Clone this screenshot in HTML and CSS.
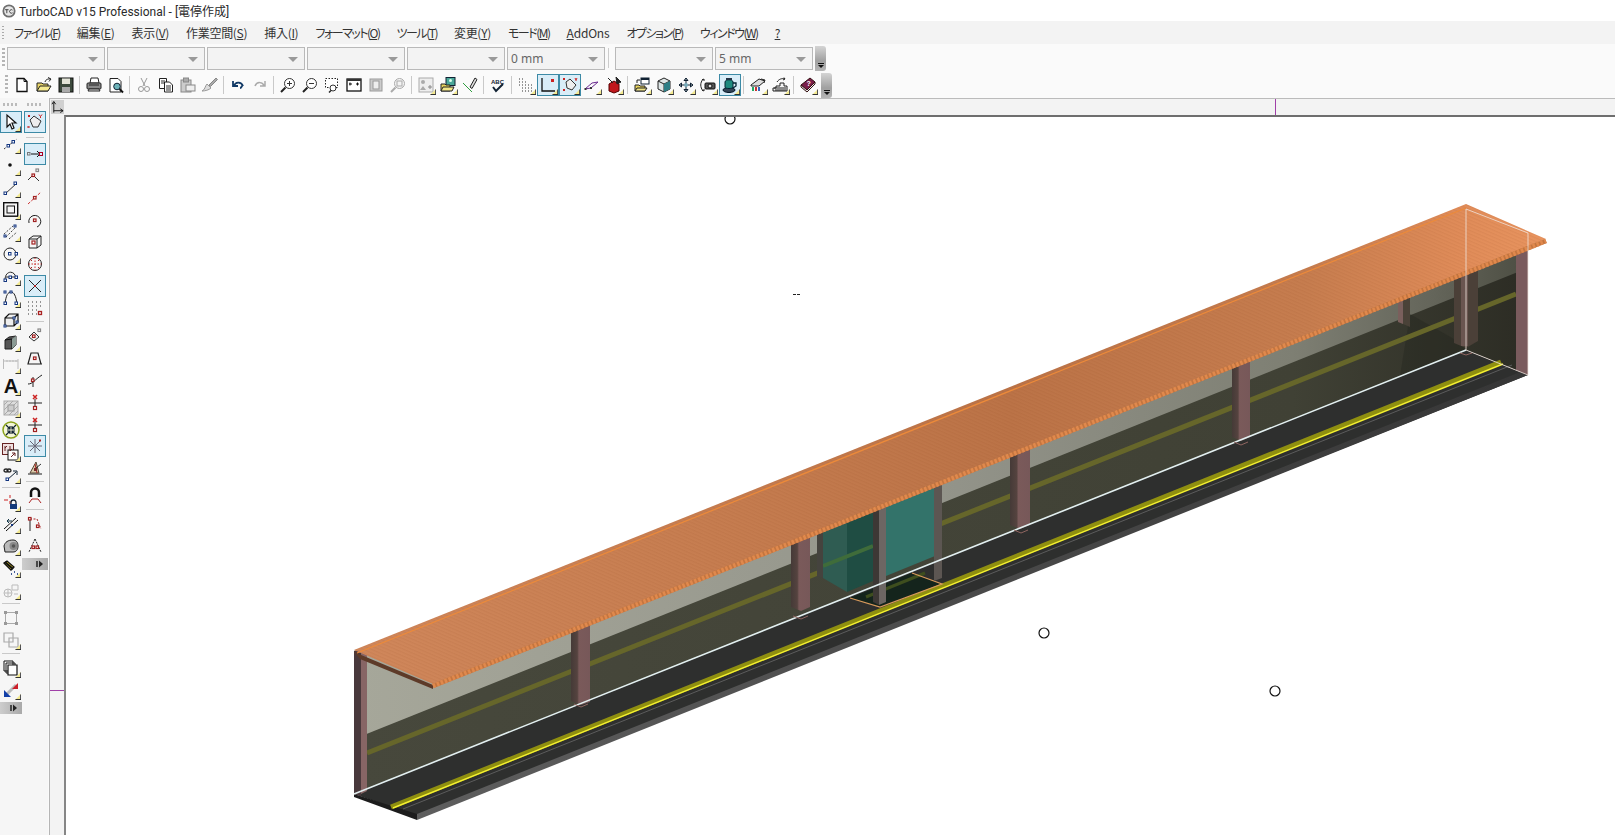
FILE: index.html
```html
<!DOCTYPE html>
<html lang="ja">
<head>
<meta charset="utf-8">
<title>TurboCAD v15 Professional</title>
<link rel="stylesheet" href="styles.css">
</head>
<body>
<div class="app">
  <header class="titlebar">
    <svg class="appicon" viewBox="0 0 16 16"><circle cx="8" cy="8" r="7.500" fill="#6f6f6f"/><circle cx="8" cy="8" r="5.500" fill="#e8e8e8"/><path d="M3.500 6.500h4M5.500 6.500v4M12 7a2 2 0 1 0 0 3" fill="none" stroke="#333"/></svg>
    <span>TurboCAD v15 Professional - [電停作成]</span>
  </header>
  <nav class="menubar">
    <span class="menu-grip"></span>
    <span class="mi k">ファイル(<u>F</u>)</span><span class="mi j">編集(<u>E</u>)</span><span class="mi j">表示(<u>V</u>)</span><span class="mi j">作業空間(<u>S</u>)</span><span class="mi j">挿入(<u>I</u>)</span><span class="mi k">フォーマット(<u>O</u>)</span><span class="mi k">ツール(<u>T</u>)</span><span class="mi j">変更(<u>Y</u>)</span><span class="mi k">モード(<u>M</u>)</span><span class="mi a">AddOns</span><span class="mi k">オプション(<u>P</u>)</span><span class="mi k">ウィンドウ(<u>W</u>)</span><span class="mi"><u>?</u></span>
  </nav>
  <div class="combobar">
    <span class="grip-v"></span>
    <div class="combo"></div><div class="combo"></div><div class="combo"></div><div class="combo"></div><div class="combo"></div><div class="combo">0 mm</div>
    <span class="combo-sep"></span>
    <div class="combo"></div><div class="combo">5 mm</div>
    <span class="overflow"></span>
  </div>
  <div class="toolbar">
    <span class="grip-v"></span>
    <span class="b"><svg viewBox="0 0 16 16"><path d="M3 1.500h7l3 3v10H3z" fill="#fff" stroke="#111" stroke-width="1.300"/><path d="M10 1.500v3h3" fill="none" stroke="#111"/></svg></span>
    <span class="b"><svg viewBox="0 0 16 16"><path d="M1 6h5l1 1h5v7H1z" fill="#e8d468" stroke="#222"/><path d="M1 14l3-5h11l-3 5z" fill="#f5ea90" stroke="#222"/><path d="M9 5c1-3 3-3 5-3M12 0.500l3 1.500-2 2.500" fill="none" stroke="#222"/></svg></span>
    <span class="b"><svg viewBox="0 0 16 16"><rect x="1" y="1" width="14" height="14" fill="#3d4a3d" stroke="#111"/><rect x="4" y="1.500" width="8" height="5.500" fill="#e4e4d8"/><rect x="4" y="10" width="8" height="5" fill="#aaa"/></svg></span>
    <span class="sep"></span>
    <span class="b"><svg viewBox="0 0 16 16"><path d="M4 6l1-5h7l1 5z" fill="#fff" stroke="#222"/><rect x="1" y="6" width="14" height="6" rx="1" fill="#888" stroke="#222"/><path d="M3 12l-1 2h12l-1-2z" fill="#ddd" stroke="#222"/><path d="M3 8h10" stroke="#222"/></svg></span>
    <span class="b"><svg viewBox="0 0 16 16"><path d="M2 1.500h8l3 3V15H2z" fill="#fff" stroke="#222"/><circle cx="9" cy="9.500" r="3.300" fill="#6cb2b8" stroke="#123"/><path d="M11.500 12l3.500 3.500" stroke="#111" stroke-width="2"/></svg></span>
    <span class="sep"></span>
    <span class="b"><svg viewBox="0 0 16 16" class="off"><path d="M5 1l4 8M11 1L7 9"/><circle cx="5" cy="12" r="2.500"/><circle cx="11" cy="12" r="2.500"/></svg></span>
    <span class="b"><svg viewBox="0 0 16 16"><path d="M1.500 1.500h7v10h-7z" fill="#fff" stroke="#222"/><path d="M6.500 5h5l3 3v7h-8z" fill="#fff" stroke="#222"/><path d="M3 4h4M3 6h3M8 9h5M8 11h5M8 13h5" stroke="#333"/></svg></span>
    <span class="b"><svg viewBox="0 0 16 16"><rect x="1" y="3" width="10" height="12" fill="#ccc" stroke="#888"/><rect x="3.500" y="1" width="5" height="4" fill="#aaa" stroke="#888"/><rect x="6" y="8" width="9" height="6" fill="#eee" stroke="#888"/></svg></span>
    <span class="b"><svg viewBox="0 0 16 16"><path d="M0 14c3-1 3-5 5-7l4 4c-2 2-6 3-9 3z" fill="#ddd" stroke="#999"/><path d="M7 8l7-7 1.500 1.500-7 7z" fill="#aaa" stroke="#888"/></svg></span>
    <span class="sep"></span>
    <span class="b"><svg viewBox="0 0 16 16"><path d="M4 9c1-4 7-5 9 0-1-2-1 2-3 2M3 4v5h5" fill="none" stroke="#123a66" stroke-width="1.800"/></svg></span>
    <span class="b"><svg viewBox="0 0 16 16"><path d="M12 9c-1-4-7-5-9 0M13 4v5H8" fill="none" stroke="#aaa" stroke-width="1.500"/></svg></span>
    <span class="sep"></span>
    <span class="b"><svg viewBox="0 0 16 16"><circle cx="9.500" cy="6.500" r="5" fill="#fff" stroke="#333"/><path d="M7 6.500h5M9.500 4v5" stroke="#333"/><path d="M5.500 10.500L1 15" stroke="#222" stroke-width="2"/></svg></span>
    <span class="b"><svg viewBox="0 0 16 16"><circle cx="9.500" cy="6.500" r="5" fill="#fff" stroke="#333"/><path d="M7 6.500h5" stroke="#333"/><path d="M5.500 10.500L1 15" stroke="#222" stroke-width="2"/></svg></span>
    <span class="b"><svg viewBox="0 0 16 16"><rect x="1.500" y="1.500" width="12" height="9" fill="#fff" stroke="#222" stroke-dasharray="1.500 1.500"/><circle cx="9" cy="11" r="3" fill="#fff" stroke="#333"/><path d="M7 13.500L5 15.500" stroke="#222" stroke-width="1.500"/></svg></span>
    <span class="b"><svg viewBox="0 0 16 16"><rect x="1" y="2" width="14" height="12" fill="#fff" stroke="#111" stroke-width="1.300"/><rect x="1" y="2" width="14" height="2" fill="#333"/><path d="M3 7h3M4 5.500v3M10 7h3M11.500 5.500v3" stroke="#111"/></svg></span>
    <span class="b"><svg viewBox="0 0 16 16"><rect x="2" y="2" width="12" height="12" fill="#ccc" stroke="#999"/><rect x="5" y="4" width="6" height="8" fill="#eee" stroke="#999"/></svg></span>
    <span class="b"><svg viewBox="0 0 16 16"><circle cx="9.500" cy="6.500" r="5" fill="#f4f4f4" stroke="#aaa"/><rect x="7" y="4" width="5" height="5" fill="none" stroke="#aaa"/><path d="M5.500 10.500L1 15" stroke="#aaa" stroke-width="2"/></svg></span>
    <span class="sep"></span>
    <span class="b fly"><svg viewBox="0 0 16 16"><rect x="1" y="1" width="14" height="14" fill="#eee" stroke="#aaa"/><circle cx="5" cy="5" r="2" fill="#aaa"/><path d="M2 13l3-4 3 4z" fill="#aaa"/><path d="M10 10h4M12 8v4" stroke="#888"/></svg></span>
    <span class="b fly"><svg viewBox="0 0 16 16"><rect x="6" y="0.500" width="9" height="8" fill="#4aa89a" stroke="#123"/><circle cx="10.500" cy="3.500" r="1.500" fill="#dfe"/><path d="M1 7h4l1 1h4v6H1z" fill="#e7d35c" stroke="#222"/><path d="M1 14l2-4h11l-2 4z" fill="#f1e688" stroke="#222"/></svg></span>
    <span class="b"><svg viewBox="0 0 16 16"><path d="M1 6l9 9" stroke="#2f9d3f"/><path d="M8 10l5-9 2 1.500-5 9z" fill="#ddd" stroke="#222"/></svg></span>
    <span class="sep"></span>
    <span class="b"><svg viewBox="0 0 16 16"><text x="1" y="6.500" class="abc">ABC</text><path d="M3 10l3 4 7-7" fill="none" stroke="#123" stroke-width="2"/></svg></span>
    <span class="sep"></span>
    <span class="b fly"><svg viewBox="0 0 16 16" class="dots"><path d="M1 2h1M4 2h1M1 5h1M4 5h1M7 5h1M1 8h1M4 8h1M7 8h1M10 8h1M13 8h1M4 11h1M7 11h1M10 11h1M13 11h1M4 14h1M7 14h1M10 14h1M13 14h1"/></svg></span>
    <span class="b on fly"><svg viewBox="0 0 16 16"><path d="M2 1v13h13" fill="none" stroke="#111" stroke-width="1.300"/><rect x="11" y="2" width="3" height="3" fill="#c22"/></svg></span>
    <span class="b on fly"><svg viewBox="0 0 16 16"><path d="M4 5l4-3 6 6-4 5-5-2z" fill="#eee" stroke="#333"/><path d="M1 1l2 2M3 1L1 3M1 12l2 2M3 12l-2 2" stroke="#c22"/><path d="M13 1l1 2 1-2M14 3v1" stroke="#c22" fill="none"/></svg></span>
    <span class="b fly"><svg viewBox="0 0 16 16"><path d="M1 12l6-1 7-6-6 1z" fill="none" stroke="#6a2a90"/><rect x="0.500" y="11" width="2" height="2" fill="#333"/><rect x="6" y="10" width="2" height="2" fill="#333"/></svg></span>
    <span class="b fly"><svg viewBox="0 0 16 16"><path d="M3 7l5-3 5 3v7l-5 2-5-2z" fill="#c0171c" stroke="#500"/><path d="M2 1l5 5M10 0l5 5-4 2z" fill="#222" stroke="#222"/></svg></span>
    <span class="sep"></span>
    <span class="b fly"><svg viewBox="0 0 16 16"><rect x="7" y="1" width="8" height="6" fill="#fff" stroke="#123"/><path d="M7 1h8v2H7z" fill="#123"/><path d="M1 8h4l1 1h5v5H1z" fill="#e7d35c" stroke="#222"/><path d="M1 14l2-3h10l-2 3z" fill="#f1e688" stroke="#222"/><path d="M3 6V3h3" fill="none" stroke="#222"/></svg></span>
    <span class="b fly"><svg viewBox="0 0 16 16"><path d="M8 1l6 3v8l-6 3-6-3V4z" fill="#dfe7e7" stroke="#222"/><path d="M2 4l6 3 6-3M8 7v8" fill="none" stroke="#222"/><path d="M8 7l6-3v8l-6 3z" fill="#2d7f86"/></svg></span>
    <span class="b fly"><svg viewBox="0 0 16 16"><path d="M8 1v14M1 8h14M8 1L6 3.500h4zM8 15l-2-2.500h4zM1 8l2.500-2v4zM15 8l-2.500-2v4z" fill="#fff" stroke="#123"/><circle cx="8" cy="8" r="2" fill="#7ab"/></svg></span>
    <span class="b fly"><svg viewBox="0 0 16 16"><path d="M3 2C0 6 0 10 3 14M2 3l2-1v2M2 13l2 1v-2" fill="none" stroke="#222"/><rect x="5" y="6" width="10" height="6" rx="1" fill="#555" stroke="#111"/><circle cx="10" cy="9" r="2" fill="#ddd" stroke="#111"/></svg></span>
    <span class="b on fly"><svg viewBox="0 0 16 16"><ellipse cx="7" cy="13" rx="6" ry="2.500" fill="#345" stroke="#012"/><path d="M3 5c0-3 8-3 8 0v5c0 2-8 2-8 0z" fill="#1e8a7f" stroke="#023"/><path d="M11 6h3v3l-3 2" fill="none" stroke="#023" stroke-width="1.300"/><path d="M4 2h6" stroke="#234" stroke-width="2"/></svg></span>
    <span class="sep"></span>
    <span class="b fly"><svg viewBox="0 0 16 16"><path d="M1 8l8-6 6 2-6 5H1z" fill="#ddd" stroke="#222"/><path d="M2 10h2v4H2z" fill="#2a6"/><path d="M5 10h2v4H5z" fill="#c33"/><path d="M8 10h2v4H8z" fill="#36b"/><path d="M11 2l4 1-1 3" fill="none" stroke="#222"/></svg></span>
    <span class="b fly"><svg viewBox="0 0 16 16"><path d="M1 14h14V9h-3V6H8v3H4v2H1z" fill="#f4f4f4" stroke="#222"/><path d="M2 11h12M3 13h11" stroke="#222"/><path d="M5 5c2-3 5-4 8-3l-1-1.500M13 2l-2 1" fill="none" stroke="#222"/></svg></span>
    <span class="sep"></span>
    <span class="b fly"><svg viewBox="0 0 16 16"><path d="M1 8l9-7 5 4-8 8z" fill="#7a1e4a" stroke="#311"/><path d="M1 8v2l6 5 8-8V5l-8 8z" fill="#eee" stroke="#311"/><text x="6.500" y="8.500" class="qm">?</text></svg></span>
    <span class="overflow tall"></span>
  </div>
  <div class="workspace">
    <aside class="tools-left">
      <div class="tcol">
        <span class="grip-h"></span>
        <span class="b on fly"><svg viewBox="0 0 16 16"><path d="M4 1v12l3-3 2 5 2-1-2-5h4z" fill="#fff" stroke="#111" stroke-width="1.200"/></svg></span>
        <span class="b fly"><svg viewBox="0 0 16 16" class="blue"><path d="M1 13l13-10" stroke="#333" stroke-dasharray="2 2"/><rect x="4" y="8.500" width="2.500" height="2.500"/><rect x="9" y="4.500" width="2.500" height="2.500"/></svg></span>
        <span class="b fly"><svg viewBox="0 0 16 16"><circle cx="7" cy="7" r="1.800" fill="#111"/></svg></span>
        <span class="b fly"><svg viewBox="0 0 16 16" class="blue"><path d="M2 14L14 3" stroke="#333"/><rect x="1" y="12" width="2.500" height="2.500"/><rect x="11" y="2" width="2.500" height="2.500"/></svg></span>
        <span class="b fly"><svg viewBox="0 0 16 16" class="dark"><rect x="0.700" y="0.700" width="14" height="13.500" stroke-width="1.400"/><rect x="4" y="4" width="7.500" height="7"/></svg></span>
        <span class="b fly"><svg viewBox="0 0 16 16" class="blue"><path d="M1 10l9-8M3 13l9-9M6 15l8-7" stroke="#444" stroke-dasharray="2 1.500"/><rect x="1" y="11" width="2" height="2"/><rect x="11" y="1" width="2" height="2"/></svg></span>
        <span class="b fly"><svg viewBox="0 0 16 16" class="blue"><circle cx="7" cy="8" r="6" stroke="#222"/><rect x="5.500" y="6.500" width="2.500" height="2.500"/><rect x="12" y="6.500" width="2.500" height="2.500"/></svg></span>
        <span class="b fly"><svg viewBox="0 0 16 16" class="blue"><path d="M2 12C2 2 12 2 13 10M3 9h9" stroke="#222"/><rect x="1" y="11" width="2.500" height="2.500"/><rect x="6" y="8" width="2.500" height="2.500"/><rect x="12" y="8" width="2.500" height="2.500"/></svg></span>
        <span class="b fly"><svg viewBox="0 0 16 16" class="blue"><path d="M2 14C3 5 5 2 8 2c3 0 5 4 6 12" stroke="#222"/><rect x="1" y="1" width="2" height="2"/><rect x="1" y="12" width="2.500" height="2.500"/><rect x="7" y="1" width="2" height="2"/><rect x="12" y="12" width="2.500" height="2.500"/></svg></span>
        <span class="b fly"><svg viewBox="0 0 16 16" class="blue"><path d="M2 6l4-4h9v8l-4 4H2zM2 6h9v8M11 6l4-4" stroke="#111" stroke-width="1.200" fill="#eee"/><rect x="1" y="13" width="2" height="2"/><rect x="10" y="5" width="2" height="2"/><rect x="13" y="9" width="2" height="2"/></svg></span>
        <span class="b fly"><svg viewBox="0 0 16 16"><path d="M2 6l4-3 7-1v9l-4 4-7 0z" fill="#555" stroke="#222"/><path d="M2 6l7-1v10" fill="none" stroke="#111"/><path d="M9 5l4-3v9l-4 4z" fill="#8a9a94"/></svg></span>
        <span class="b fly"><svg viewBox="0 0 16 16"><path d="M0.500 3v10M15 3v10M1 5h14M4 4v2M7 4v2M10 4v2M13 4v2" fill="none" stroke="#bbb"/></svg></span>
        <span class="b fly"><span class="bigA">A</span></span>
        <span class="b fly"><svg viewBox="0 0 16 16"><rect x="1" y="1" width="14" height="14" fill="#ddd" stroke="#aaa"/><path d="M1 5l4-4M1 10L10 1M1 15L15 1M6 15l9-9M11 15l4-4" stroke="#aaa"/><rect x="5" y="5" width="6" height="6" fill="#ccc" stroke="#999"/></svg></span>
        <span class="b"><svg viewBox="0 0 18 18" class="big"><circle cx="9" cy="9" r="8" fill="#f4f6d8" stroke="#8aa21a" stroke-width="1.500"/><path d="M4 4l4 4M8 5v3H5M14 4l-4 4M10 5v3h3M4 14l4-4M8 13v-3H5M14 14l-4-4M10 13v-3h3" fill="none" stroke="#123" stroke-width="1.200"/></svg></span>
        <span class="b fly"><svg viewBox="0 0 18 18" class="big"><rect x="0.500" y="0.500" width="11" height="11" fill="#efe0e0" stroke="#622"/><rect x="6" y="7" width="10" height="10" fill="#fff" stroke="#111"/><path d="M3 3v5M5 3L3 5M8 3v5M10 6L8 8M9 14l4-4M13 13v-3h-3" fill="none" stroke="#622"/></svg></span>
        <span class="b fly"><svg viewBox="0 0 16 16"><path d="M1 4.500c0-2 4-2 4 0s-4 2-4 0zM4 4.500c0-2 4-2 4 0s-4 2-4 0z" fill="none" stroke="#222" stroke-width="1.300"/><path d="M4 14L13 6M10 5h4v4" fill="none" stroke="#123"/><rect x="3" y="12" width="2.500" height="2.500" fill="#fff" stroke="#13357f"/></svg></span>
        <span class="hsep"></span>
        <span class="b fly"><svg viewBox="0 0 16 16"><path d="M1 6h4M7 1v3M7 7v3" stroke="#c22" fill="none"/><path d="M8 11V8.500a2.500 2.500 0 0 1 5 0V11" fill="none" stroke="#123" stroke-width="1.300"/><rect x="7" y="10" width="7" height="5" fill="#123a7a"/></svg></span>
        <span class="b fly"><svg viewBox="0 0 16 16"><path d="M1 13L13 2M3 15L15 4" stroke="#111" fill="none"/><path d="M4 5h5M6 3l-2 2 2 2" stroke="#134" fill="none"/><rect x="8" y="8" width="2" height="2" fill="#13357f"/></svg></span>
        <span class="b fly"><svg viewBox="0 0 16 16"><path d="M1 8c1-4 4-6 9-6 3 0 5 2 5 6s-2 6-5 6H2z" fill="#bbb" stroke="#222"/><circle cx="10.500" cy="8" r="4" fill="#888"/><circle cx="10.500" cy="8" r="1.800" fill="#555"/></svg></span>
        <span class="b fly"><svg viewBox="0 0 16 16"><path d="M1 3l3-2 7 6-3 3z" fill="#e0c820" stroke="#111" stroke-width="1.300"/><path d="M2 2l8 7" stroke="#111" stroke-width="2"/><path d="M8 14h.8M11 12h.8M14 14h.8" stroke="#13357f" stroke-width="2"/></svg></span>
        <span class="b fly"><svg viewBox="0 0 16 16"><circle cx="5" cy="11" r="4" fill="none" stroke="#bbb"/><path d="M1 11h8M5 7v8M9 3h6v5H9zM11 12h4" fill="none" stroke="#bbb"/></svg></span>
        <span class="hsep"></span>
        <span class="b"><svg viewBox="0 0 16 16"><rect x="2.500" y="2.500" width="11" height="11" fill="none" stroke="#aaa"/><path d="M1 1h3v3H1zM12 1h3v3h-3zM1 12h3v3H1zM12 12h3v3h-3z" fill="#999"/></svg></span>
        <span class="b fly"><svg viewBox="0 0 16 16"><path d="M1 1h9v9H1zM6 6h9v9H6z" fill="none" stroke="#aaa" stroke-width="1.200"/></svg></span>
        <span class="hsep"></span>
        <span class="b fly"><svg viewBox="0 0 16 16"><path d="M1 1h9v10H1z M3 3h9v10H3z" fill="#fff" stroke="#111"/><path d="M5 5h9v10H5z" fill="#fff" stroke="#111" stroke-width="1.200"/></svg></span>
        <span class="b fly"><svg viewBox="0 0 16 16"><path d="M3 13L13 3" stroke="#bbb" stroke-width="3"/><path d="M1 8v7h7z" fill="#123fa8"/><path d="M15 1v6H9z" fill="#cc1f2a"/></svg></span>
        <span class="handle"><svg viewBox="0 0 8 8"><path d="M1 1v6" stroke="#222" stroke-width="1.500"/><path d="M3 0.500l4 3.500-4 3.500z" fill="#222"/></svg></span>
      </div>
      <div class="tcol second">
        <span class="grip-h"></span>
        <span class="b on"><svg viewBox="0 0 16 16"><path d="M3 6l4-4 7 5-3 6H6z" fill="#eee" stroke="#333"/><path d="M1 1l2 2M3 1L1 3M0.500 12l2 2M2.500 12l-2 2" stroke="#c22"/><path d="M12 0.500l1.500 2 1.500-2M13.500 2.500V4" stroke="#c22" fill="none"/></svg></span>
        <span class="hsep wide"></span>
        <span class="b on"><svg viewBox="0 0 16 16"><path d="M4 8h9M10 5l3 3-3 3" fill="none" stroke="#111"/><rect x="0.500" y="6.500" width="2.500" height="2.500" fill="none" stroke="#777"/><rect x="12.500" y="6.500" width="3" height="3" fill="none" stroke="#a02"/></svg></span>
        <span class="b"><svg viewBox="0 0 16 16" class="red"><path d="M1 12l5-5 6 6" stroke="#333"/><rect x="5" y="6" width="2.500" height="2.500"/><rect x="9" y="1" width="2.500" height="2.500" class="grey"/></svg></span>
        <span class="b"><svg viewBox="0 0 16 16" class="red"><path d="M1 14L14 2" stroke="#c33" stroke-dasharray="3 1.500"/><rect x="6.500" y="6.500" width="2.500" height="2.500"/></svg></span>
        <span class="b"><svg viewBox="0 0 16 16" class="red"><path d="M2 11a6 6 0 1 1 8 4" stroke="#222"/><rect x="6.500" y="7" width="2.500" height="2.500"/></svg></span>
        <span class="b"><svg viewBox="0 0 16 16" class="red"><path d="M2 5l4-3h8v9l-4 3H2zM2 5h8v9M10 5l4-3" stroke="#222"/><rect x="5" y="7" width="3" height="3"/></svg></span>
        <span class="b"><svg viewBox="0 0 16 16" class="red"><circle cx="8" cy="8" r="6.500" stroke="#222"/><path d="M1.500 8h13M8 1.500v13" stroke="#c33" stroke-dasharray="1.500 1.500"/><path d="M3 3l2 2M13 3l-2 2M3 13l2-2M13 13l-2-2" stroke="#a22"/></svg></span>
        <span class="b on"><svg viewBox="0 0 16 16"><path d="M2 2l12 12M14 2L2 14" stroke="#222"/><rect x="7" y="7" width="2" height="2" fill="#a22"/></svg></span>
        <span class="b"><svg viewBox="0 0 16 16" class="dots"><path d="M1 2h1M5 2h1M9 2h1M13 2h1M1 6h1M5 6h1M9 6h1M13 6h1M1 10h1M5 10h1M9 10h1M1 14h1M5 14h1M9 14h1"/><rect x="11.500" y="11.500" width="3" height="3" fill="none" stroke="#a22" stroke-width="1.300"/></svg></span>
        <span class="hsep"></span>
        <span class="b"><svg viewBox="0 0 16 16" class="red"><path d="M2 9l5-5 5 5-5 4z" stroke="#333"/><rect x="5.500" y="7" width="2.500" height="2.500"/><rect x="11" y="1" width="2.500" height="2.500" class="grey"/></svg></span>
        <span class="b"><svg viewBox="0 0 16 16" class="red"><path d="M4 3h7l3 11H1z M1 14h14" stroke="#222" stroke-width="1.200"/><rect x="6.500" y="7" width="2.500" height="2.500"/></svg></span>
        <span class="b"><svg viewBox="0 0 16 16" class="red"><path d="M1 12c5 0 6-4 14-9M6 15V5" stroke="#222"/><rect x="4.500" y="7" width="2.500" height="2.500"/></svg></span>
        <span class="b"><svg viewBox="0 0 16 16" class="red"><path d="M1 9h14M8 5v10" stroke="#222"/><path d="M6 1l4 4M10 1L6 5" stroke="#c22" stroke-width="1.500"/><rect x="6.500" y="12.500" width="3" height="3"/></svg></span>
        <span class="b"><svg viewBox="0 0 16 16" class="red"><path d="M1 9h14M8 5v10" stroke="#222"/><path d="M6 2l4 4M10 2L6 6" stroke="#c22" stroke-width="1.500"/><rect x="6.500" y="12.500" width="3" height="3"/></svg></span>
        <span class="b on"><svg viewBox="0 0 16 16"><path d="M1 8h14M8 1v14M3 3l10 10M13 3L3 13" stroke="#667"/><rect x="12" y="1.500" width="2" height="2" fill="#a22"/></svg></span>
        <span class="b"><svg viewBox="0 0 16 16"><path d="M1 14h14" stroke="#888" stroke-width="2"/><path d="M9 2L3 13h9z" fill="#d9c9a9" stroke="#543"/><path d="M8 4l2 9" stroke="#a22"/><path d="M9 8l5-4" stroke="#333"/><rect x="7" y="8" width="3" height="3" fill="#7a2a2a"/></svg></span>
        <span class="hsep"></span>
        <span class="b"><svg viewBox="0 0 16 16"><path d="M4 9V4.500a4 4 0 0 1 8 0V9" fill="none" stroke="#111" stroke-width="2.500"/><path d="M2 15l3-4h6l3 4" fill="none" stroke="#a22"/></svg></span>
        <span class="hsep"></span>
        <span class="b"><svg viewBox="0 0 16 16" class="red"><path d="M3 3v12" stroke="#222"/><path d="M3 3h7l4 10" stroke="#a22" stroke-dasharray="2 1.500"/><rect x="1.500" y="1.500" width="2.500" height="2.500"/><rect x="9.500" y="9" width="2.500" height="2.500"/></svg></span>
        <span class="b"><svg viewBox="0 0 16 16" class="red"><path d="M8 1L2 14M8 1l6 13" stroke="#222" stroke-dasharray="2 1"/><rect x="5" y="8" width="2.500" height="2.500"/><rect x="9" y="8" width="2.500" height="2.500"/></svg></span>
        <span class="handle"><svg viewBox="0 0 8 8"><path d="M1 1v6" stroke="#222" stroke-width="1.500"/><path d="M3 0.500l4 3.500-4 3.500z" fill="#222"/></svg></span>
      </div>
    </aside>
    <section class="docarea">
      <div class="hruler">
        <span class="corner"><svg viewBox="0 0 14 14"><path d="M3 13V2M1 4l2-3 2 3M3 11h10M10 9l3 2-3 2" fill="none" stroke="#111"/></svg></span>
        <span class="hmark"></span>
      </div>
      <div class="docbody">
        <div class="vruler"><span class="vmark"></span></div>
        <div class="canvas">
          <svg class="scene" viewBox="66 116 1549 719">
            <defs>
              <linearGradient id="gUp" gradientUnits="userSpaceOnUse" x1="354" y1="0" x2="1528" y2="0">
                <stop offset="0" stop-color="#a6a79a"/><stop offset=".5" stop-color="#93948a"/><stop offset=".8" stop-color="#7e7f73"/><stop offset=".92" stop-color="#64655a"/><stop offset="1" stop-color="#4c4d42"/>
              </linearGradient>
              <linearGradient id="gLow" gradientUnits="userSpaceOnUse" x1="354" y1="0" x2="1528" y2="0">
                <stop offset="0" stop-color="#47483c"/><stop offset=".8" stop-color="#404135"/><stop offset="1" stop-color="#2c2c24"/>
              </linearGradient>
              <linearGradient id="gRoof" gradientUnits="userSpaceOnUse" x1="354" y1="0" x2="1546" y2="0">
                <stop offset="0" stop-color="#d0875b"/><stop offset=".3" stop-color="#c67d50"/><stop offset=".55" stop-color="#bb7347"/><stop offset=".8" stop-color="#c67d4f"/><stop offset=".93" stop-color="#e08c59"/><stop offset="1" stop-color="#e8945f"/>
              </linearGradient>
              <linearGradient id="gFace" gradientUnits="userSpaceOnUse" x1="417" y1="0" x2="1528" y2="0">
                <stop offset="0" stop-color="#5e5e5e"/><stop offset="1" stop-color="#363636"/>
              </linearGradient>
              <linearGradient id="gP">
                <stop offset="0" stop-color="#453a37"/><stop offset=".33" stop-color="#55433f"/><stop offset=".42" stop-color="#7a5a5a"/><stop offset="1" stop-color="#775859"/>
              </linearGradient>
              <pattern id="corr" patternUnits="userSpaceOnUse" width="12" height="3.200" patternTransform="rotate(23.300)">
                <rect width="12" height="1.200" fill="#7a3c14" fill-opacity=".07"/>
              </pattern>
            </defs>
            <polygon points="354,650 1466,205 1528,232 1528,374 1466,349 354,793" fill="url(#gLow)"/>
            <polygon points="354,650 1466,205 1528,232 1528,267 354,738" fill="url(#gUp)"/>
            <polygon points="1410,313 1454,338 1466,349 1400,375" fill="#24251d" fill-opacity=".4"/>
            <line x1="367" y1="752" x2="1516" y2="293" stroke="#66662a" stroke-width="5"/>
            <polygon points="1398,270 1403,270 1403,323 1398,321" fill="#7a5f5c"/>
            <polygon points="1403,270 1410,270 1410,326 1403,323" fill="#4a4238"/>
            <polygon points="1454,240 1478,230 1478,340 1466,347 1454,342" fill="#4b4038"/>
            <polygon points="1461,240 1468,240 1468,345 1461,345" fill="#6a5550"/>

            <polygon points="823,470 847,470 847,591 823,577" fill="#2f5c52"/>
            <polygon points="847,470 873,470 873,580 847,591" fill="#1f4d43"/>
            <line x1="823" y1="565" x2="873" y2="545" stroke="#3f6c3a" stroke-width="4"/>
            <polygon points="817,480 823,480 823,577 817,575" fill="#45433e"/>
            <polygon points="886,470 935,450 935,555 886,575" fill="#33736a"/>

            <polygon points="354,793 1466,349 1528,374 417,815" fill="#2e2f2e"/>
            <polygon points="417,813 1528,368 1528,374 417,819" fill="url(#gFace)"/>
            <polygon points="354,793 417,813 417,819 354,796" fill="#1c1c1c"/>
            <polygon points="850,597 912,572 942,583 880,606" fill="#14241c"/>
            <line x1="866" y1="596" x2="925" y2="572" stroke="#3e4e1e" stroke-width="3"/>
            <line x1="403" y1="808" x2="1512" y2="364" stroke="#5c5c5c" stroke-width="1"/>
            <line x1="391" y1="806" x2="1501" y2="361" stroke="#8f8f10" stroke-width="5"/>
            <line x1="393" y1="807" x2="1503" y2="363" stroke="#f4f030" stroke-width="1.400"/>
            <polyline points="850,597 880,606 942,583 912,572" fill="none" stroke="#d99a5c" stroke-width="1.200"/>

            <polygon points="571,600 590,600 590,701 581,704 571,700" fill="url(#gP)"/>
            <polygon points="791,500 810,500 810,606 801,610 791,606" fill="url(#gP)"/>
            <polygon points="873,480 879,480 879,604 873,601" fill="#3d3835"/>
            <polygon points="879,480 886,480 886,601 879,604" fill="#6c6663"/>
            <polygon points="934,450 942,450 942,577 934,580" fill="#5c5652"/>
            <polygon points="1010,430 1030,430 1030,524 1020,528 1010,524" fill="url(#gP)"/>
            <polygon points="1232,340 1250,340 1250,436 1241,440 1232,436" fill="url(#gP)"/>
            <polygon points="354,650 361,650 361,795 354,793" fill="#49393c"/>
            <polygon points="361,652 367,652 367,790 361,793" fill="#876565"/>
            <polygon points="1516,240 1528,240 1528,374 1516,369" fill="#7a5b5d"/>

            <line x1="354" y1="793" x2="1466" y2="349" stroke="#e2eff0" stroke-width="1.600"/>
            <g class="bases">
              <path d="M574 703l7 3 7-3"/>
              <path d="M793 615l8 3 7-3"/>
              <path d="M1014 529l7 3 7-3"/>
              <path d="M1234 441l7 3 7-3"/>
              <path d="M1460 352l6 2 6-2"/>
            </g>
            <polygon points="354,651 433,684 433,688 360,658" fill="#5d3a28"/>
            <polygon points="354,649 1466,203 1546,238 433,683" fill="url(#gRoof)"/>
            <polygon points="354,649 1466,203 1546,238 433,683" fill="url(#corr)"/>
            <line x1="357" y1="652" x2="1466" y2="207" stroke="#ec8a3a" stroke-width="1.200"/>
            <line x1="433" y1="685" x2="1546" y2="240" stroke="#c4753f" stroke-width="4.500"/>
            <line x1="433" y1="685" x2="1546" y2="240" stroke="#e0894d" stroke-width="4.500" stroke-dasharray="2.500 1.700"/>
            <polyline points="1528,374 1466,349 1466,208 1528,232 1528,374" fill="none" stroke="#f0e4dc" stroke-opacity=".8" stroke-width="1"/>

            <g class="ctrl">
              <circle cx="730" cy="118" r="5"/>
              <circle cx="1044" cy="632" r="5"/>
              <circle cx="1275" cy="690" r="5"/>
            </g>
            <path d="M793 293.500h3M797 293.500h3" stroke="#222" stroke-width="1"/>
          </svg>
        </div>
      </div>
    </section>
  </div>
</div>
</body>
</html>
```
FILE: styles.css
```css
* { box-sizing: border-box; }
html, body { margin: 0; padding: 0; background: #fff; }
body { font-family: "Noto Sans", "Noto Sans CJK JP", sans-serif; color: #333; overflow: hidden; }
.app { width: 1615px; height: 835px; display: flex; flex-direction: column; overflow: hidden; background: #fafafa; }

.titlebar { height: 21px; flex: none; background: #fff; display: flex; align-items: center; gap: 3px; padding-left: 2px; font-family: Roboto, "Noto Sans CJK JP", sans-serif; font-size: 12px; color: #2a2a2a; }
.appicon { width: 14px; height: 14px; flex: none; }

.menubar { height: 23px; flex: none; background: #f3f3f3; display: flex; align-items: center; padding-left: 5.5px; position: relative; font-size: 12px; font-family: "Noto Sans CJK JP", "Noto Sans", sans-serif; font-feature-settings: "palt"; color: #333; }
.menu-grip { position: absolute; left: 2px; top: 5px; height: 13px; width: 2px; background: repeating-linear-gradient(to bottom, #aaa 0 1px, transparent 1px 3px); }
.mi { padding: 0 8.5px; white-space: nowrap; }
.mi.k { letter-spacing: -1.5px; }
.mi.j { letter-spacing: -0.3px; }
.mi.a { letter-spacing: -0.2px; }
.mi.a::first-letter { text-decoration: underline; }

.combobar { height: 28px; flex: none; display: flex; align-items: center; padding: 0 0 0 2px; position: relative; }
.grip-v { width: 3px; height: 20px; flex: none; background: repeating-linear-gradient(to bottom, #b5b5b5 0 2px, transparent 2px 4px); }
.combobar .grip-v { margin-right: 2px; }
.combo { width: 98px; height: 23px; margin-right: 2px; flex: none; background: #f3f3f3; border: 1px solid #b9b9b9; font-size: 12px; color: #666; display: flex; align-items: center; padding-left: 3px; position: relative; }
.combo::after { content: ""; position: absolute; right: 6px; top: 9px; border-left: 5px solid transparent; border-right: 5px solid transparent; border-top: 5px solid #999; }
.combo-sep { width: 3px; height: 20px; margin: 0 4px 0 1px; border-left: 1px solid #ccc; flex: none; }
.overflow { width: 11px; height: 25px; flex: none; background: linear-gradient(to bottom, #d4d4d4, #a0a0a0 60%, #b4b4b4); position: relative; border-radius: 0 3px 3px 0; }
.overflow::after { content: ""; position: absolute; left: 3px; bottom: 7px; width: 6px; border-top: 1px solid #111; }
.overflow::before { content: ""; position: absolute; left: 3px; bottom: 3px; border-left: 3px solid transparent; border-right: 3px solid transparent; border-top: 3px solid #111; }

.toolbar { height: 26px; flex: none; display: flex; align-items: center; padding-left: 5px; }
.toolbar .grip-v { margin-right: 3px; }
.overflow.tall { height: 25px; margin-left: 2px; }

.b { width: 22px; height: 22px; flex: none; display: flex; align-items: center; justify-content: center; position: relative; border: 1px solid transparent; }
.b svg { width: 16px; height: 16px; display: block; overflow: visible; }
.b svg.big { width: 18px; height: 18px; }
.b.on { background: #d9edf8; border-color: #3c8aa6; }
.fly::after { content: ""; position: absolute; right: 0; bottom: 0; width: 6px; height: 6px; clip-path: polygon(100% 0, 100% 100%, 0 100%); background: linear-gradient(to top, #333 1px, transparent 1px), linear-gradient(to left, #555 1px, transparent 1px), #f3e98f; }
.sep { width: 6px; height: 20px; flex: none; position: relative; }
.sep::after { content: ""; position: absolute; left: 2px; top: 1px; bottom: 1px; width: 1px; background: #c9c9c9; }

.workspace { flex: 1; display: flex; min-height: 0; }
.tools-left { width: 48px; flex: none; display: flex; gap: 2px; background: #f6f6f6; align-items: flex-start; }
.tcol { width: 22px; display: flex; flex-direction: column; align-items: stretch; }
.grip-h { height: 3px; margin: 5px 4px 5px 3px; background: repeating-linear-gradient(to right, #bbb 0 2px, transparent 2px 4px); }
.hsep { height: 6px; position: relative; flex: none; }
.hsep::after { content: ""; position: absolute; left: 2px; right: 2px; top: 2px; height: 1px; background: #c9c9c9; }
.hsep.wide { height: 10px; }
.hsep.wide::after { top: 4px; }
.handle { height: 12px; margin-top: 1px; background: linear-gradient(to right, #cdcdcd, #a9a9a9); display: flex; align-items: center; justify-content: flex-end; padding-right: 4px; }
.second .handle { width: 26px; margin-left: -2px; }
.handle svg { width: 8px; height: 8px; }

.docarea { flex: 1; display: flex; flex-direction: column; min-width: 0; border-left: 1px solid #b5b5b5; margin-left: 1px; }
.hruler { height: 17px; flex: none; background: #f3f3f3; position: relative; border-top: 1px solid #bbb; }
.corner { position: absolute; left: 1px; top: 1px; width: 13px; height: 14px; background: #d0d0d0; display: flex; }
.corner svg { width: 13px; height: 14px; }
.hmark { position: absolute; left: 1225px; top: 0; width: 1px; height: 16px; background: #a040a8; }
.docbody { flex: 1; display: flex; min-height: 0; }
.vruler { width: 14px; flex: none; background: #f3f3f3; position: relative; }
.vmark { position: absolute; left: 0; right: 0; top: 575px; height: 1px; background: #a040a8; }
.canvas { flex: 1; background: #fff; border-left: 2px solid #868686; border-top: 2px solid #6e6e6e; overflow: hidden; min-width: 0; }
.scene { display: block; width: 1549px; height: 719px; }
.ctrl circle { fill: #fff; stroke: #111; stroke-width: 1.200; }
.bases path { fill: none; stroke: #8f6560; stroke-width: 1; }

.off { fill: none; stroke: #999; }
.blue { fill: none; }
.blue rect { fill: #fff; stroke: #13357f; stroke-width: 1; }
.red { fill: none; }
.red rect { fill: #fff; stroke: #a02020; stroke-width: 1.200; }
.red rect.grey { stroke: #888; }
.red path { fill: none; }
.dark { fill: none; stroke: #111; }
.dots { stroke: #333; fill: none; }
.abc { font: bold 6px "Liberation Sans", sans-serif; fill: #123; }
.qm { font: bold 7px "Liberation Sans", sans-serif; fill: #fff; }
.bigA { font: bold 20px/20px "Liberation Sans", sans-serif; color: #111; }
```
